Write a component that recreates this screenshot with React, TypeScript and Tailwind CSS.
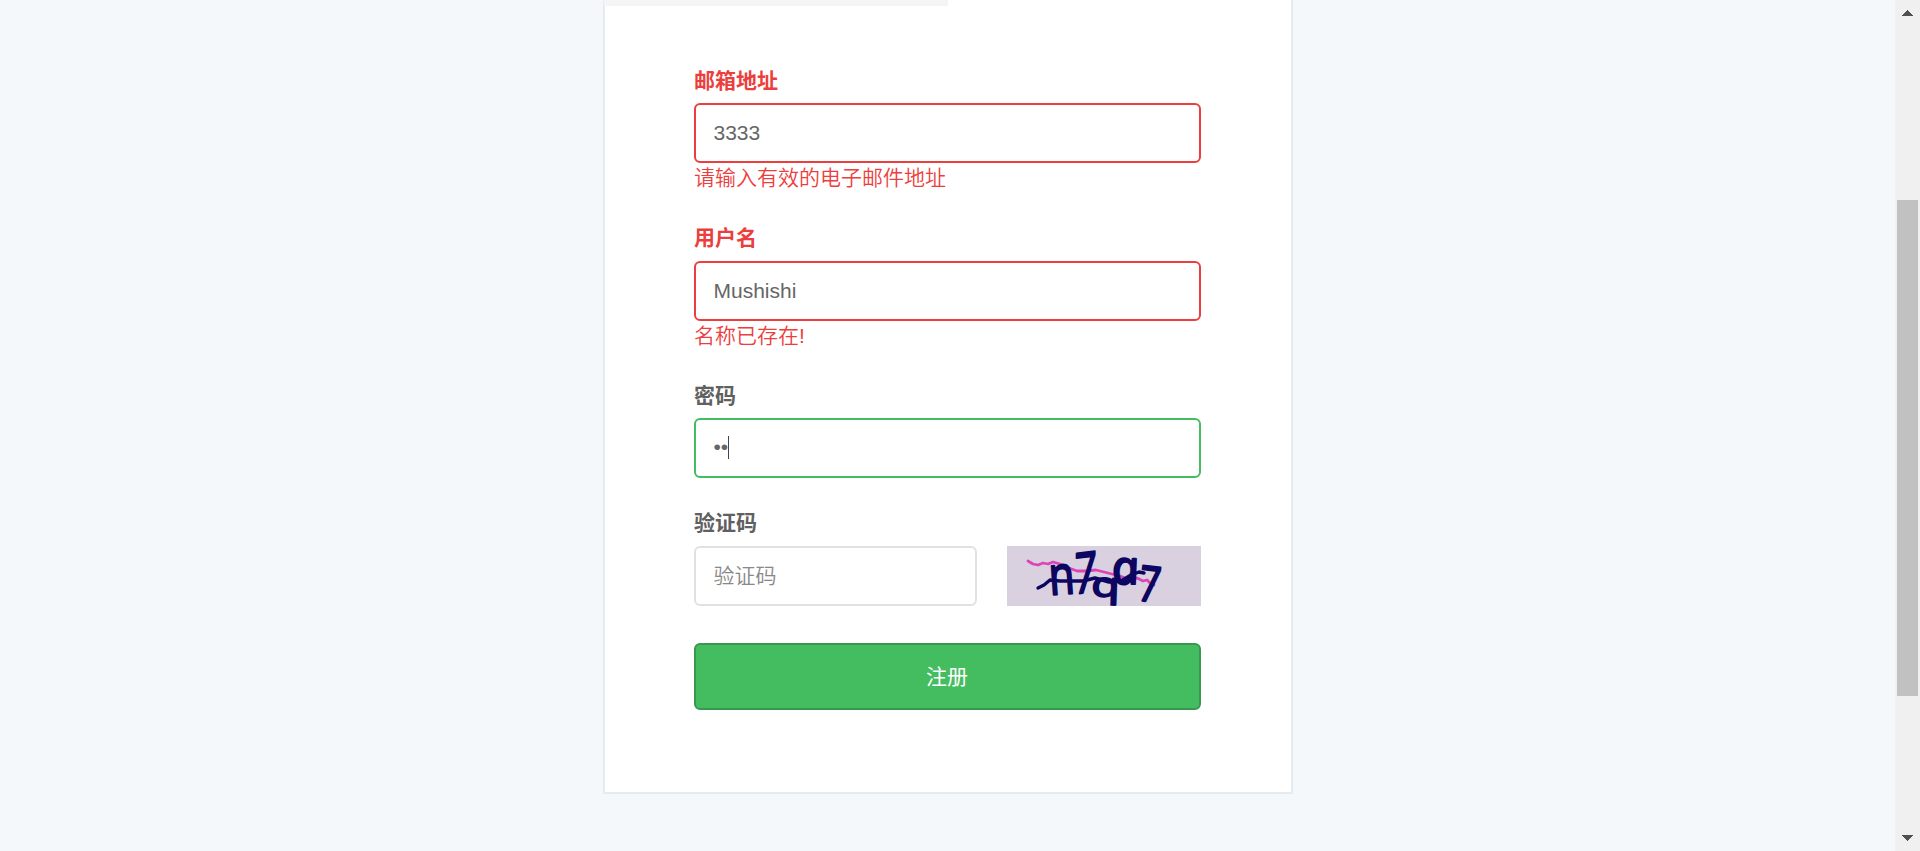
import type { ReactNode } from "react";

const inputBase =
  "block h-[60px] rounded-md border-2 bg-white pl-[17.5px] pr-[18px] text-[21px] text-[#666] outline-none placeholder:font-[350] placeholder:text-[#888] placeholder:opacity-100";

function Field({
  label,
  error,
  invalid = false,
  className = "",
  children,
}: {
  label: string;
  error?: string;
  invalid?: boolean;
  className?: string;
  children: ReactNode;
}) {
  return (
    <div className={`flex flex-col ${className}`}>
      <label
        className={`h-8 text-[21px] leading-8 font-bold ${invalid ? "text-[#ed3e3e]" : "text-[#606060]"}`}
      >
        {label}
      </label>
      {children}
      {error && (
        <p className="h-[30px] text-[21px] leading-[30px] font-[350] text-[#ed3e3e]">{error}</p>
      )}
    </div>
  );
}

function Captcha() {
  return (
    <svg width="194" height="60" viewBox="0 0 194 60" className="block overflow-visible bg-[#d9d1e0]">
      <g fill="none" strokeLinecap="round" strokeLinejoin="round">
        <path
          d="M21 15l5 3 5 1 5-2 5 1 5-2 7 2 9 4 8 3 9 0 10-1 12 3 12 3 10 4 7-2 6 3 4-1 4 4 3 1"
          stroke="#dc45b9"
          strokeWidth="2.8"
        />
        <path
          d="M31 42l6-3 6-5 10 1 23 0 12-3 14 4 12-1 10-6 8-3 5 1"
          stroke="#0c0660"
          strokeWidth="3.4"
        />
      </g>
      <g
        fill="#0c0660"
        stroke="#0c0660"
        strokeWidth="2.2"
        strokeLinejoin="round"
        className="font-['Open_Sans',sans-serif]"
      >
        <text transform="translate(43 49) rotate(-4) scale(0.76 0.98)" fontSize="55">n</text>
        <text transform="translate(67 48) rotate(-7) skewX(-8) scale(0.72 1.03)" fontSize="54">7</text>
        <text transform="translate(84 50) rotate(2) scale(1.06 0.78)" fontSize="44">q</text>
        <text
          transform="translate(107 38) skewX(10) scale(1 0.98)"
          fontSize="48"
          className="italic"
        >
          a
        </text>
        <text transform="translate(130 54) rotate(7) scale(0.76 1)" fontSize="49">7</text>
      </g>
    </svg>
  );
}

function Scrollbar() {
  return (
    <div className="flex h-full w-[25px] flex-col items-center justify-between bg-[#f0f0f0]">
      <svg width="25" height="200" viewBox="0 0 25 200" shapeRendering="crispEdges">
        <path d="M7 16L12.5 10L18 16Z" fill="#505050" />
      </svg>
      <div className="h-[496px] w-[21px] bg-[#c1c1c1]" />
      <svg width="25" height="155" viewBox="0 0 25 155" shapeRendering="crispEdges">
        <path d="M7 139L12.5 145L18 139Z" fill="#505050" />
      </svg>
    </div>
  );
}

export default function App() {
  return (
    <div className="flex h-[851px] w-full overflow-hidden bg-[#f4f8fb] font-['Liberation_Sans','Noto_Sans_CJK_SC',sans-serif]">
      <main className="flex flex-1 items-start justify-center pl-px">
        <section className="h-[794px] w-[690px] border-x-2 border-b-2 border-[#e3ebf3] bg-white">
          <div className="-ml-px h-1.5 w-[344px] bg-[#f5f5f5]" />
          <form className="mx-[89px] flex w-[507px] flex-col pt-[59px]">
            <Field label="邮箱地址" error="请输入有效的电子邮件地址" invalid>
              <input className={`${inputBase} mt-1.5 w-full border-[#ed3e3e]`} defaultValue="3333" />
            </Field>
            <Field label="用户名" error="名称已存在!" invalid className="mt-[29px]">
              <input className={`${inputBase} mt-[7px] w-full border-[#ed3e3e]`} defaultValue="Mushishi" />
            </Field>
            <Field label="密码" className="mt-[29px]">
              <div className={`${inputBase} mt-1.5 w-full border-[#44bd60]`}>
                <div className="flex h-full items-center pb-0.5">
                  <span>••</span>
                  <span className="-ml-[0.5px] h-[23px] w-px bg-[#444]" />
                </div>
              </div>
            </Field>
            <Field label="验证码" className="mt-[29px]">
              <div className="mt-[7px] flex justify-between">
                <input className={`${inputBase} w-[283px] border-[#e1e1e1]`} placeholder="验证码" />
                <Captcha />
              </div>
            </Field>
            <button
              type="button"
              className="mt-[37px] h-[67px] w-full rounded-md border-2 border-[#38994e] bg-[#44bd60] pr-px text-[21px] text-white"
            >
              注册
            </button>
          </form>
        </section>
      </main>
      <Scrollbar />
    </div>
  );
}
